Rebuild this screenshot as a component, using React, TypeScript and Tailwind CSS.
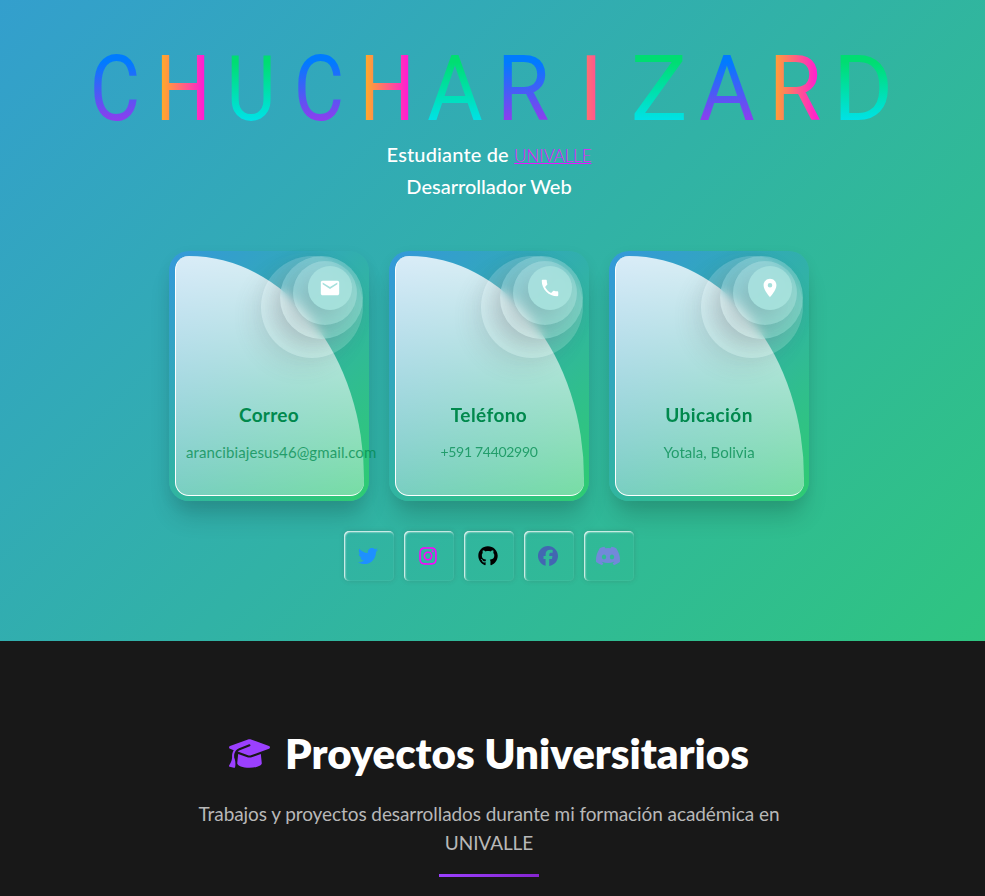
import React from "react";
import { MdEmail, MdPhone, MdLocationOn } from "react-icons/md";
import { BsDiscord } from "react-icons/bs";
import { FaGraduationCap, FaTwitter, FaInstagram, FaGithub, FaFacebook } from "react-icons/fa6";

const blue = "bg-[linear-gradient(180deg,#007bff_24%,#9a38ec_84%)]";
const warm = "bg-[linear-gradient(90deg,#ffa62e_16%,#ff1fd0_84%)]";
const green = "bg-[linear-gradient(180deg,#00dd72_24%,#00e2f0_84%)]";

const letters = [
  { ch: "C", tone: blue, fit: "scale-x-[0.86]" },
  { ch: "H", tone: warm, fit: "scale-x-[0.86]" },
  { ch: "U", tone: green, fit: "scale-x-[0.84]" },
  { ch: "C", tone: blue, fit: "scale-x-[0.86]" },
  { ch: "H", tone: warm, fit: "scale-x-[0.86]" },
  { ch: "A", tone: green, fit: "scale-x-[0.95]" },
  { ch: "R", tone: blue, fit: "scale-x-[0.95]" },
  { ch: "I", tone: warm, fit: "scale-x-100" },
  { ch: "Z", tone: green, fit: "scale-x-[1.06]" },
  { ch: "A", tone: blue, fit: "scale-x-[0.95]" },
  { ch: "R", tone: warm, fit: "scale-x-[0.95]" },
  { ch: "D", tone: green, fit: "scale-x-[1.02]" },
];

const ring = "absolute rounded-full";
const ringShadow = "shadow-[-10px_10px_20px_0px_rgba(100,100,111,0.2)]";

type CardProps = {
  icon: React.ReactNode;
  title: string;
  text: string;
  titleClass: string;
  textClass: string;
};

function ContactCard({ icon, title, text, titleClass, textClass }: CardProps) {
  return (
    <article className="relative h-[250px] w-[200px] rounded-[20px] bg-[linear-gradient(135deg,#3498db,#2ecc71)] shadow-[0_20px_25px_-5px_rgba(0,0,0,0.16),0_5px_15px_rgba(0,0,0,0.06)]">
      <div className="absolute inset-x-[5.5px] inset-y-[5px] rounded-[15px] rounded-tr-[100%] border-b border-l border-white bg-[linear-gradient(0deg,rgba(255,255,255,0.35),rgba(255,255,255,0.815))]" />
      <div className="relative flex h-full flex-col items-center pt-[150px] text-center">
        <h2 className={`whitespace-nowrap text-[19px] leading-[27px] font-bold text-[#00894d] ${titleClass}`}>{title}</h2>
        <p className={`mt-[12px] whitespace-nowrap leading-[24px] text-[#00894d]/75 ${textClass}`}>{text}</p>
      </div>
      <div className={`${ring} top-[5px] right-[6px] size-[102px] bg-white/18 shadow-[-10px_10px_20px_0px_rgba(100,100,111,0.1)]`} />
      <div className={`${ring} ${ringShadow} top-[5px] right-[6px] size-[83px] bg-white/20 backdrop-blur-[5px]`} />
      <div className={`${ring} ${ringShadow} top-[10px] right-[12px] size-[64px] bg-white/20 backdrop-blur-[5px]`} />
      <div className={`${ring} ${ringShadow} top-[15px] right-[17px] flex size-[44px] items-center justify-center bg-[#b3e8e2]/60 text-[22px] text-white`}>
        {icon}
      </div>
    </article>
  );
}

const socials = [
  { Icon: FaTwitter, color: "text-[#1e90ff] text-[20px]" },
  { Icon: FaInstagram, color: "text-[#ff00ff] text-[20px]" },
  { Icon: FaGithub, color: "text-black text-[20px]" },
  { Icon: FaFacebook, color: "text-[#4267b2] text-[20px]" },
  { Icon: BsDiscord, color: "text-[#7289da] text-[24px]" },
];

export default function App() {
  return (
    <div className="h-[896px] overflow-hidden bg-[#181818] font-['Lato','Open_Sans',sans-serif]">
      <header className="flex h-[641px] flex-col items-center bg-[linear-gradient(135deg,#3498db_-18%,#2ecc71_120%)] pr-[7px] pt-[37px]">
        <h1 className="flex h-[102px] font-['Roboto',sans-serif] text-[90px] leading-[105px] font-normal">
          {letters.map(({ ch, tone, fit }, i) => (
            <span key={i} className={`h-[105px] w-[68px] bg-clip-text text-center text-transparent ${tone} ${fit}`}>{ch}</span>
          ))}
        </h1>
        <p className="text-[20px] leading-[31px] font-medium text-white">
          <span className="tracking-[0.15px]">Estudiante de </span>
          <a href="#" className="text-[17px] font-light tracking-[-0.1px] text-[#e815ff] underline">UNIVALLE</a>
        </p>
        <p className="text-[20px] leading-[31px] font-medium text-white">Desarrollador Web</p>
        <section className="mt-[49px] flex gap-5">
          <ContactCard icon={<MdEmail />} title="Correo" text="arancibiajesus46@gmail.com" titleClass="tracking-[0.3px]" textClass="self-start pl-[17px] text-[15px] tracking-[0.1px]" />
          <ContactCard icon={<MdPhone />} title="Teléfono" text="+591 74402990" titleClass="tracking-[0.4px]" textClass="text-[14px] tracking-[-0.3px]" />
          <ContactCard icon={<MdLocationOn />} title="Ubicación" text="Yotala, Bolivia" titleClass="tracking-[0.4px]" textClass="text-[15px]" />
        </section>
        <nav className="mt-[30px] flex gap-[10px]">
          {socials.map(({ Icon, color }, i) => (
            <a key={i} href="#" className={`flex size-[50px] items-center justify-center rounded-[5px] pr-[2px] pb-[1px] shadow-[inset_1px_1px_2px_white,0_0_5px_rgba(70,70,70,0.2)] ${color}`}>
              <Icon className="shrink-0" />
            </a>
          ))}
        </nav>
      </header>
      <main className="flex flex-col items-center pr-[7px] pt-[82px]">
        <h2 className="flex items-center gap-[15px] text-[42px] leading-[60px] font-extrabold text-white">
          <FaGraduationCap className="h-[33px] w-[41px] text-[#9b40ff]" />
          <span>Proyectos Universitarios</span>
        </h2>
        <p className="mt-4 w-[600px] text-center text-[19px] leading-[29px] tracking-[-0.08px] text-[#b8b8b8]">
          Trabajos y proyectos desarrollados durante mi formación académica en UNIVALLE
        </p>
        <div className="mt-[17px] h-[3px] w-[100px] bg-linear-to-r from-[#9b40ff] to-[#8525d0]" />
      </main>
    </div>
  );
}
